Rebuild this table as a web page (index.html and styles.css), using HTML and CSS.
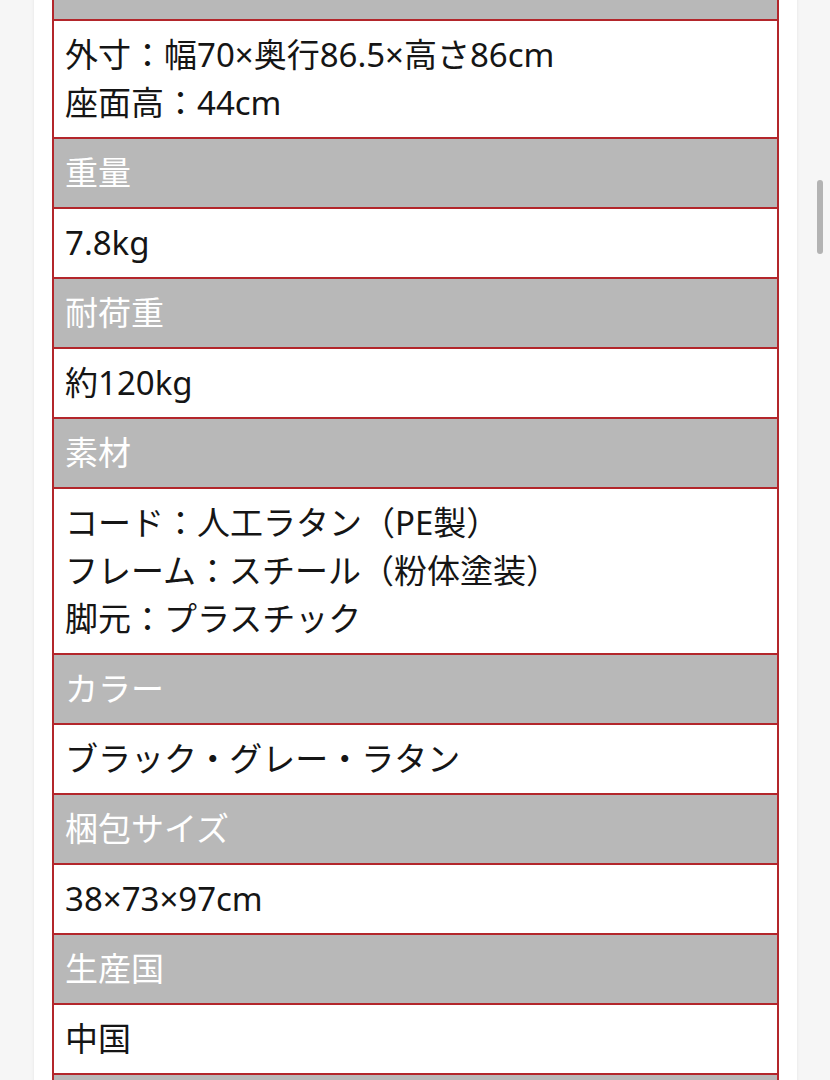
FILE: index.html
```html
<!DOCTYPE html>
<html lang="ja">
<head>
<meta charset="utf-8">
<link rel="stylesheet" href="styles.css">
</head>
<body>
<div class="page">
  <div class="spec">
    <div class="row head">サイズ</div>
    <div class="row body">外寸：幅70×奥行86.5×高さ86cm<br>座面高：44cm</div>
    <div class="row head">重量</div>
    <div class="row body">7.8kg</div>
    <div class="row head">耐荷重</div>
    <div class="row body">約120kg</div>
    <div class="row head">素材</div>
    <div class="row body">コード：人工ラタン（PE製）<br>フレーム：スチール（粉体塗装）<br>脚元：プラスチック</div>
    <div class="row head">カラー</div>
    <div class="row body">ブラック・グレー・ラタン</div>
    <div class="row head">梱包サイズ</div>
    <div class="row body">38×73×97cm</div>
    <div class="row head">生産国</div>
    <div class="row body">中国</div>
    <div class="row head">備考</div>
    <div class="row body">組立品</div>
  </div>
</div>
<div class="scrollbar"></div>
</body>
</html>
```

FILE: styles.css
```css
html, body {
  margin: 0;
  padding: 0;
}
body {
  background: #f6f6f6;
  height: 1080px;
  overflow: hidden;
  font-family: "Noto Sans", "Noto Sans CJK JP", sans-serif;
}
.page {
  width: 727px;
  margin-left: 34px;
  padding: 0 18px;
  background: #ffffff;
  min-height: 1080px;
  box-shadow: 1px 0 3px rgba(0,0,0,0.04), -1px 0 3px rgba(0,0,0,0.04);
}
.spec {
  margin-top: -51px;
  border: 2px solid #b3262b;
  border-bottom: none;
}
.row {
  border-bottom: 2px solid #b3262b;
  padding: 10px 11px;
  font-size: 33px;
  line-height: 48px;
}
.head {
  background: #b8b8b8;
  color: #ffffff;
}
.body {
  background: #ffffff;
  color: #151515;
}
.scrollbar {
  position: absolute;
  left: 817px;
  top: 180px;
  width: 6px;
  height: 74px;
  border-radius: 3px;
  background: #b3b3b3;
}
```
